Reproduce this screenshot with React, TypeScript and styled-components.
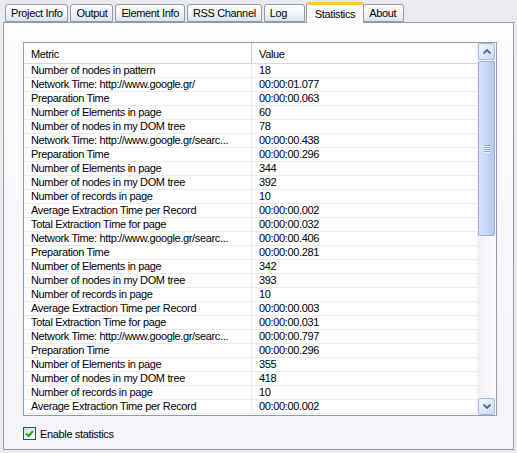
import React from 'react';
import styled, { createGlobalStyle } from 'styled-components';

const GlobalStyle = createGlobalStyle`
    html, body {
        margin: 0;
        padding: 0;
        background: #ebeaee;
    }
    body {
        font-family: "Liberation Sans", Arial, sans-serif;
        font-size: 11px;
        letter-spacing: -0.35px;
        color: #000;
    }
`;

const Window = styled.div`
    width: 517px;
    height: 453px;
    box-sizing: border-box;
    padding: 2px 4px 0 3px;
    background: #ebeaee;
`;

const TabStrip = styled.div`
    display: flex;
    align-items: flex-end;
    height: 20px;
    padding-left: 2px;
`;

const Tab = styled.div<{ $active?: boolean }>`
    position: relative;
    box-sizing: border-box;
    min-width: 41px;
    height: ${(p) => (p.$active ? '21px' : '18px')};
    margin: ${(p) => (p.$active ? '0 -1px -1px -1px' : '0 2px 0 0')};
    padding: ${(p) => (p.$active ? '3px 8px 0' : '2px 5px 0')};
    border: 1px solid #919b9c;
    border-bottom: ${(p) => (p.$active ? 'none' : '1px solid #919b9c')};
    border-top: ${(p) => (p.$active ? '3px solid #ffc83c' : '1px solid #919b9c')};
    border-radius: 3px 3px 0 0;
    background: ${(p) => (p.$active ? '#fcfcfe' : 'linear-gradient(#ffffff 0%, #f4f6fa 50%, #d9e3f2 100%)')};
    font-size: 11px;
    line-height: 13px;
    white-space: nowrap;
    z-index: ${(p) => (p.$active ? 2 : 1)};
`;

const Panel = styled.div`
    position: relative;
    box-sizing: border-box;
    width: 511px;
    height: 428px;
    border: 1px solid #919b9c;
    background: linear-gradient(#fcfcfe, #f4f4f9);
    padding: 19px 0 0 19px;
    z-index: 1;
`;

const ListBox = styled.div`
    box-sizing: border-box;
    width: 474px;
    height: 374px;
    border: 1px solid #8d9bb0;
    background: #fff;
    display: flex;
`;

const Table = styled.div`
    flex: 1;
    display: flex;
    flex-direction: column;
    overflow: hidden;
`;

const HeaderRow = styled.div`
    display: grid;
    grid-template-columns: 228px 1fr;
    height: 21px;
    box-sizing: border-box;
    border-bottom: 1px solid #d8d8d8;
`;

const HeaderCell = styled.div<{ $divider?: boolean }>`
    display: flex;
    align-items: center;
    padding-left: 7px;
    padding-top: 1px;
    border-right: ${(p) => (p.$divider ? '1px solid #c7c7c7' : 'none')};
`;

const Row = styled.div`
    display: grid;
    grid-template-columns: 228px 1fr;
    height: 14px;
    box-sizing: border-box;
    border-bottom: 1px solid #ececec;
`;

const Cell = styled.div<{ $divider?: boolean }>`
    padding-left: 7px;
    line-height: 13px;
    white-space: nowrap;
    overflow: hidden;
    border-right: ${(p) => (p.$divider ? '1px solid #ececec' : 'none')};
`;

const ScrollBar = styled.div`
    width: 19px;
    box-sizing: border-box;
    padding: 0 1px 0 1px;
    display: flex;
    flex-direction: column;
    background: linear-gradient(to right, #f0f1f6, #fbfbfd);
`;

const ArrowButton = styled.div`
    height: 17px;
    box-sizing: border-box;
    border: 1px solid #a9b9dc;
    border-radius: 2px;
    background: linear-gradient(135deg, #f2f6ff, #c9d8f8);
    display: flex;
    align-items: center;
    justify-content: center;
`;

const Track = styled.div`
    flex: 1;
    display: flex;
    flex-direction: column;
    padding: 1px 0;
`;

const Thumb = styled.div`
    height: 175px;
    box-sizing: border-box;
    border: 1px solid #98acd8;
    border-radius: 2px;
    background: linear-gradient(to right, #d5e2ff, #c3d4fa 60%, #b4c8f3);
    display: flex;
    flex-direction: column;
    align-items: center;
    justify-content: center;
    gap: 1px;
`;

const GripLine = styled.div`
    width: 6px;
    height: 1px;
    background: #8ea3ce;
    box-shadow: 0 1px 0 #eef3ff;
`;

const CheckRow = styled.label`
    display: flex;
    align-items: center;
    gap: 4px;
    margin-top: 11px;
`;

const CheckBox = styled.span`
    width: 13px;
    height: 13px;
    box-sizing: border-box;
    border: 1px solid #1c5180;
    background: linear-gradient(135deg, #dcdcd7, #ffffff);
    display: flex;
    align-items: center;
    justify-content: center;
`;

const rows: [string, string][] = [
    ['Number of nodes in pattern', '18'],
    ['Network Time: http://www.google.gr/', '00:00:01.077'],
    ['Preparation Time', '00:00:00.063'],
    ['Number of Elements in page', '60'],
    ['Number of nodes in my DOM tree', '78'],
    ['Network Time: http://www.google.gr/searc...', '00:00:00.438'],
    ['Preparation Time', '00:00:00.296'],
    ['Number of Elements in page', '344'],
    ['Number of nodes in my DOM tree', '392'],
    ['Number of records in page', '10'],
    ['Average Extraction Time per Record', '00:00:00.002'],
    ['Total Extraction Time for page', '00:00:00.032'],
    ['Network Time: http://www.google.gr/searc...', '00:00:00.406'],
    ['Preparation Time', '00:00:00.281'],
    ['Number of Elements in page', '342'],
    ['Number of nodes in my DOM tree', '393'],
    ['Number of records in page', '10'],
    ['Average Extraction Time per Record', '00:00:00.003'],
    ['Total Extraction Time for page', '00:00:00.031'],
    ['Network Time: http://www.google.gr/searc...', '00:00:00.797'],
    ['Preparation Time', '00:00:00.296'],
    ['Number of Elements in page', '355'],
    ['Number of nodes in my DOM tree', '418'],
    ['Number of records in page', '10'],
    ['Average Extraction Time per Record', '00:00:00.002'],
];

const tabs = ['Project Info', 'Output', 'Element Info', 'RSS Channel', 'Log', 'Statistics', 'About'];

const Chevron = ({ up }: { up?: boolean }) => (
    <svg width="8" height="5" viewBox="0 0 8 5">
        <path
            d={up ? 'M0.5 4.5 L4 1 L7.5 4.5' : 'M0.5 0.5 L4 4 L7.5 0.5'}
            fill="none"
            stroke="#4d6185"
            strokeWidth="1.8"
        />
    </svg>
);

export default function App() {
    return (
        <>
            <GlobalStyle />
            <Window>
                <TabStrip>
                    {tabs.map((t) => (
                        <Tab key={t} $active={t === 'Statistics'}>
                            {t}
                        </Tab>
                    ))}
                </TabStrip>
                <Panel>
                    <ListBox>
                        <Table>
                            <HeaderRow>
                                <HeaderCell $divider>Metric</HeaderCell>
                                <HeaderCell>Value</HeaderCell>
                            </HeaderRow>
                            {rows.map(([m, v], i) => (
                                <Row key={i}>
                                    <Cell $divider>{m}</Cell>
                                    <Cell>{v}</Cell>
                                </Row>
                            ))}
                        </Table>
                        <ScrollBar>
                            <ArrowButton>
                                <Chevron up />
                            </ArrowButton>
                            <Track>
                                <Thumb>
                                    <GripLine />
                                    <GripLine />
                                    <GripLine />
                                    <GripLine />
                                </Thumb>
                            </Track>
                            <ArrowButton>
                                <Chevron />
                            </ArrowButton>
                        </ScrollBar>
                    </ListBox>
                    <CheckRow>
                        <CheckBox>
                            <svg width="9" height="8" viewBox="0 0 9 8">
                                <path d="M1 3.5 L3.5 6 L8 1" fill="none" stroke="#21a121" strokeWidth="2" />
                            </svg>
                        </CheckBox>
                        Enable statistics
                    </CheckRow>
                </Panel>
            </Window>
        </>
    );
}
